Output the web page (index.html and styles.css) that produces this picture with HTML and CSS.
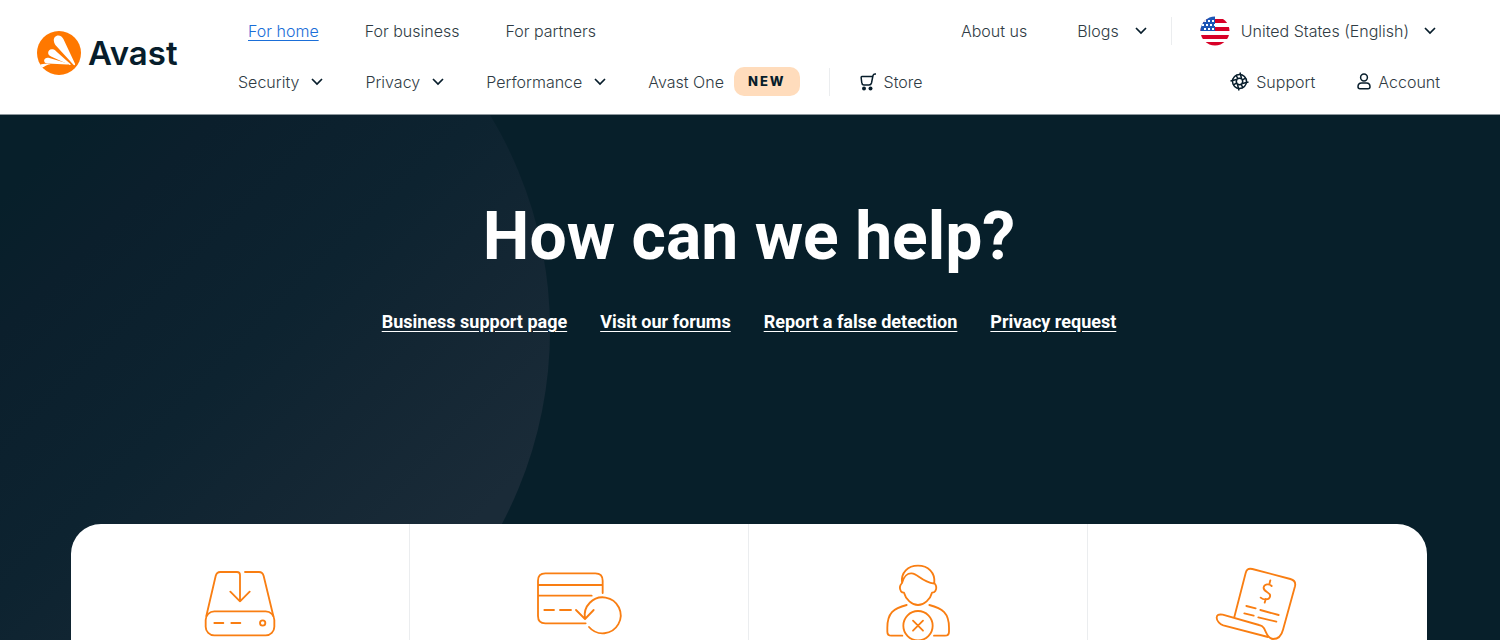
FILE: index.html
```
<!DOCTYPE html>
<html lang="en-us">
<head>
    <meta charset="UTF-8">
    <meta name="viewport" content="width=device-width, initial-scale=1.0">
    <title>Official Avast Support</title>
    <link rel="stylesheet" href="styles.css">
</head>
<body>
    <header class="header">
        <a class="logo" href="#">
            <svg class="logo-mark" viewBox="53 63 130 130" aria-hidden="true">
                <circle cx="118" cy="128" r="65" fill="#ff7800"/>
                <g fill="#fff">
                    <path d="M103 93C101 83 108 76 116 76c7 0 12 4 15 11l34 72c2 5-2 7-5 3L110 107c-4-4-6-8-7-14z"/>
                    <path d="M86 129c-1-9 6-14 14-12 4 1 7 3 11 7l40 36c3 3 1 5-3 3l-52-24c-6-2-9-5-10-10z"/>
                    <path d="M74 150c1-7 7-9 13-8l55 16c4 1 3 4 0 4l-58-3c-6 0-10-3-10-9z"/>
                    <path d="M62 163c8-3 20-4 31-2-8 1-15 4-20 8l-5 1z"/>
                </g>
            </svg>
            <span class="logo-text">Avast</span>
        </a>

        <nav class="nav">
            <div class="nav-row">
                <div class="nav-group segments">
                    <a class="active" href="#">For home</a>
                    <a href="#">For business</a>
                    <a href="#">For partners</a>
                </div>
                <div class="nav-group right">
                    <a href="#">About us</a>
                    <button class="blogs">Blogs <svg class="chevron" viewBox="0 0 12 8"><path d="M1 1l5 5 5-5"/></svg></button>
                    <button class="region">
                        <svg class="flag" viewBox="0 0 30 30" aria-hidden="true">
                            <clipPath id="round"><circle cx="15" cy="15" r="14.5"/></clipPath>
                            <g clip-path="url(#round)">
                                <path fill="#fff" d="M0 0h30v30H0z"/>
                                <path fill="#d80027" d="M0 3h30v4H0zM0 11h30v4H0zM0 19h30v4H0zM0 26h30v4H0z"/>
                                <path fill="#1c55b5" d="M0 0h15v15H0z"/>
                                <path stroke="#fff" stroke-width="2" stroke-dasharray="2 2" d="M4 5h11M2 9h13M4 13h11"/>
                            </g>
                        </svg>
                        United States (English)
                        <svg class="chevron" viewBox="0 0 12 8"><path d="M1 1l5 5 5-5"/></svg>
                    </button>
                </div>
            </div>

            <div class="nav-row">
                <div class="nav-group products">
                    <button>Security <svg class="chevron" viewBox="0 0 12 8"><path d="M1 1l5 5 5-5"/></svg></button>
                    <button>Privacy <svg class="chevron" viewBox="0 0 12 8"><path d="M1 1l5 5 5-5"/></svg></button>
                    <button>Performance <svg class="chevron" viewBox="0 0 12 8"><path d="M1 1l5 5 5-5"/></svg></button>
                    <a class="avast-one" href="#">Avast One <span class="badge">NEW</span></a>
                    <a class="store" href="#">
                        <svg class="icon-cart" viewBox="0 0 17 18">
                            <path d="M16 1h-1q-1.500 0-2 1.500L11.500 10q-.5 2-2.500 2H4q-2 0-2-2M13 3.500H2Q1 3.500 1.200 5l.6 5"/>
                            <circle class="solid" cx="4" cy="15.500" r="2"/><circle class="solid" cx="10.500" cy="15.500" r="2"/>
                        </svg>
                        Store
                    </a>
                </div>
                <div class="nav-group account">
                    <a href="#">
                        <svg class="icon-support" viewBox="0 0 19 19">
                            <circle cx="9.500" cy="9.500" r="7"/><circle cx="9.500" cy="9.500" r="3.200"/>
                            <path d="M7.800 6.700L6 3M10 .5l1.500 6M12.300 7.800L16 6M18.500 10l-6 1.500M11.200 12.300L13 16M9 18.500l-1.500-6M6.700 11.200L3 13M.5 9l6-1.500"/>
                        </svg>
                        Support
                    </a>
                    <a href="#">
                        <svg class="icon-user" viewBox="0 0 14 17">
                            <circle cx="7" cy="4.500" r="3.400"/><path d="M3 15.800h8q2 0 2-2Q13 10 9.500 10h-5Q1 10 1 13.800q0 2 2 2z"/>
                        </svg>
                        Account
                    </a>
                </div>
            </div>
        </nav>
    </header>

    <main class="hero">
        <h1>How can we help?</h1>
        <div class="hero-links">
            <a href="#">Business support page</a>
            <a href="#">Visit our forums</a>
            <a href="#">Report a false detection</a>
            <a href="#">Privacy request</a>
        </div>

        <div class="topics">
            <a class="topic" href="#" aria-label="Installation">
                <svg viewBox="9 -15 288 288">
                    <rect x="50" y="154" width="206" height="72" rx="26"/>
                    <path d="M52 168L80 48q3-12 14-12h50q9 0 9 9v79M124 95l29 29 29-29M168 36h42q11 0 14 12l29 120M76 189h27M127 189h27"/>
                    <circle cx="221" cy="189" r="8"/>
                </svg>
            </a>
            <a class="topic" href="#" aria-label="Refunds">
                <svg viewBox="33 -15 288 288">
                    <path d="M248 99V62q0-22-22-22H76q-22 0-22 22v106q0 22 22 22h121M54 75h194M54 107h161M73 150h29M120 150h33"/>
                    <path d="M195 176A54 54 0 1 1 207 201M168 150l27 27 26-27"/>
                </svg>
            </a>
            <a class="topic" href="#" aria-label="Cancel subscription">
                <svg viewBox="0 0 288 288">
                    <path d="M96 84C92 52 114 32 144 32s52 20 49 52M96 84q-11 12-3 25 3 4 9 4c5 20 24 37 42 37s37-17 42-37q7 0 10-5 7-12-3-24M96 84c5-20 17-30 29-29 20 2 28 24 68 31"/>
                    <path d="M110 150c-40 10-58 25-58 68v12q0 12 12 12h33M178 150c40 10 59 25 59 68v12q0 12-12 12h-33M129 197l30 30M159 197l-30 30"/>
                    <circle cx="144" cy="212" r="44"/>
                </svg>
            </a>
            <a class="topic" href="#" aria-label="Billing">
                <svg viewBox="30 0 288 288">
                    <path d="M103 186l34-132q4-16 20-12l114 30q18 5 14 22l-36 130c-5 20-15 28-30 28-18-2-20-22-28-34q-4-6-14-8L68 179q-18-3-18 9c0 10 10 20 20 23l134 35"/>
                    <path d="M139 153l28 7M181 165l55 15M133 175l28 7M175 187l54 13"/>
                    <path d="M215 93c-8-8-22-6-24 4-3 14 24 14 19 28-3 10-19 11-28 3M208 88l3-12M194 143l3-11"/>
                </svg>
            </a>
        </div>
    </main>
</body>
</html>
```
FILE: styles.css
```
:root {
    --ink: #071d2b;
    --text: #2f3b44;
    --orange: #f97e12;
    --blue: #1a6ed8;
    --line: #ebedef;
}

* {
    margin: 0;
    padding: 0;
    box-sizing: border-box;
}

body {
    display: flex;
    flex-direction: column;
    height: 100vh;
    overflow: hidden;
    font-family: Inter, "Liberation Sans", sans-serif;
    font-size: 16px;
    font-weight: 300;
    line-height: 24px;
    color: var(--text);
    background: #fff;
}

a {
    color: inherit;
    text-decoration: none;
}

button {
    font: inherit;
    color: inherit;
    background: none;
    border: none;
    cursor: pointer;
}

svg {
    flex-shrink: 0;
    fill: none;
    stroke: none;
}

/* header */
.header {
    display: flex;
    align-items: center;
    gap: 60px;
    padding: 5px 60px 7px 37px;
    border-bottom: 1px solid #8d979d;
}

.logo {
    display: flex;
    align-items: center;
    gap: 7px;
    width: 141px;
    padding-bottom: 6px;
}

.logo-mark {
    width: 44px;
    height: 44px;
}

.logo-text {
    font-size: 33px;
    font-weight: 600;
    line-height: 44px;
    color: var(--ink);
}

.nav {
    flex: 1;
}

.nav-row {
    display: flex;
    justify-content: space-between;
    height: 51px;
}

.nav-group,
.nav-group a,
.nav-group button {
    display: flex;
    align-items: center;
    white-space: nowrap;
}

.segments {
    gap: 46px;
    padding-left: 10px;
}

.nav-group .active {
    color: var(--blue);
    text-decoration: underline;
    text-underline-offset: 3px;
}

.products,
.account {
    gap: 42px;
}

.products button,
.blogs {
    gap: 12px;
}

.right {
    gap: 50px;
}

.region {
    gap: 11px;
    margin-left: -30px;
    padding-left: 28px;
    border-left: 1px solid var(--line);
    height: 28px;
}

.blogs .chevron,
.region .chevron {
    margin: 0 4px;
}

.chevron {
    width: 12px;
    height: 8px;
    stroke: var(--ink);
    stroke-width: 1.7;
}

.flag {
    width: 30px;
    height: 30px;
}

.avast-one {
    gap: 10px;
}

.badge {
    padding: 0 14px;
    border-radius: 10px;
    background: #ffdcbc;
    color: var(--ink);
    font-size: 13px;
    font-weight: 800;
    line-height: 29px;
    letter-spacing: 2px;
}

.store {
    gap: 7px;
    height: 28px;
    margin-left: -13px;
    padding-left: 30px;
    border-left: 1px solid var(--line);
}

.account a {
    gap: 7px;
}

.icon-cart,
.icon-support,
.icon-user {
    stroke: var(--ink);
    stroke-width: 1.5;
}

.icon-cart {
    width: 17px;
    height: 18px;
}

.icon-support {
    width: 19px;
    height: 19px;
}

.icon-user {
    width: 14px;
    height: 17px;
}

.solid {
    fill: var(--ink);
    stroke: none;
}

/* hero */
.hero {
    position: relative;
    flex: 1;
    display: flex;
    flex-direction: column;
    align-items: center;
    padding: 82px 73px 0 71px;
    overflow: hidden;
    background: #071f2a;
    color: #fff;
}

.hero::before {
    content: "";
    position: absolute;
    top: -200px;
    left: -280px;
    width: 830px;
    height: 830px;
    border-radius: 50%;
    background: linear-gradient(135deg, #071f2a 34%, #0b1f2c 42%, #0d2330 58%, #132633 68%, #1a2b38 82%);
}

.hero > * {
    position: relative;
}

h1,
.hero-links {
    font-family: Roboto, "Liberation Sans", sans-serif;
    font-weight: 700;
}

h1 {
    font-size: 66px;
    line-height: 80px;
}

.hero-links {
    display: flex;
    gap: 33px;
    margin-top: 33px;
    font-size: 18px;
}

.hero-links a {
    text-decoration: underline;
    text-underline-offset: 3px;
}

.topics {
    display: grid;
    grid-template-columns: repeat(4, 1fr);
    flex-shrink: 0;
    width: 100%;
    margin-top: 190px;
    border-radius: 30px 30px 0 0;
    background: #fff;
}

.topic {
    display: flex;
    justify-content: center;
    padding: 31px 0 48px;
    border-right: 1px solid var(--line);
}

.topic:last-child {
    border-right: none;
}

.topic svg {
    width: 96px;
    height: 96px;
    stroke: var(--orange);
    stroke-width: 5.5;
    stroke-linecap: round;
    stroke-linejoin: round;
}
```
